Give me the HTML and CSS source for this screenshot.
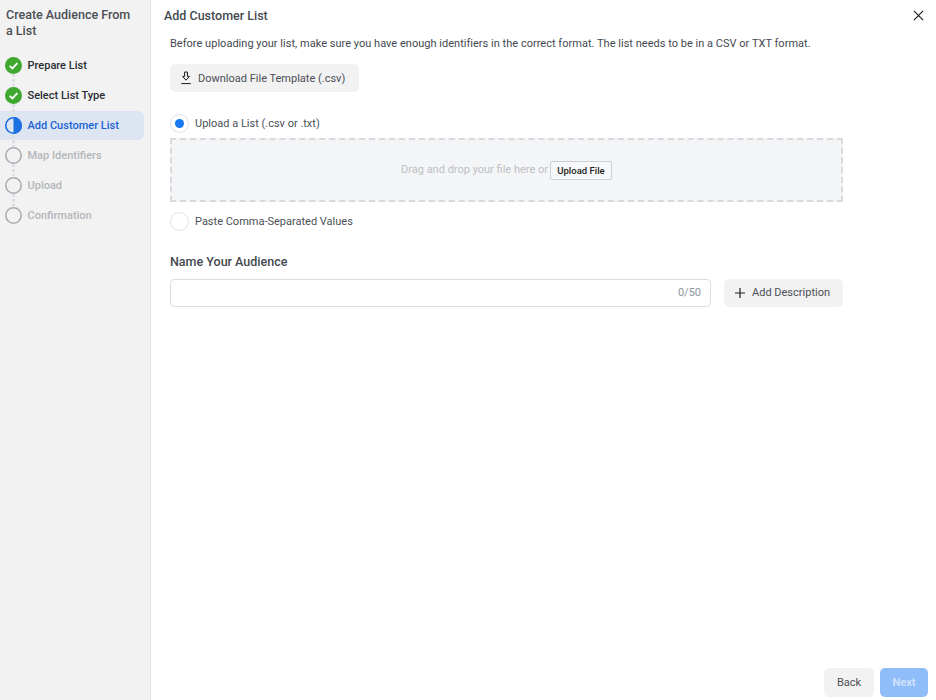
FILE: index.html
```
<!DOCTYPE html>
<html lang="en">
<head>
<meta charset="utf-8">
<title>Create Audience From a List</title>
<link rel="stylesheet" href="styles.css">
</head>
<body>
<div class="app">
  <aside class="side">
    <h1 class="side-title">Create Audience From a List</h1>
    <ol class="steps">
      <li class="step done">
        <svg class="ic" viewBox="0 0 16 16"><circle cx="8" cy="8" r="8" fill="#3fa82e"/><path d="M4.4 8.3l2.5 2.4 4.8-4.9" fill="none" stroke="#fff" stroke-width="1.7"/></svg>
        <span>Prepare List</span><i class="dots"></i>
      </li>
      <li class="step done">
        <svg class="ic" viewBox="0 0 16 16"><circle cx="8" cy="8" r="8" fill="#3fa82e"/><path d="M4.4 8.3l2.5 2.4 4.8-4.9" fill="none" stroke="#fff" stroke-width="1.7"/></svg>
        <span>Select List Type</span><i class="dots"></i>
      </li>
      <li class="step active">
        <svg class="ic" viewBox="0 0 16 16"><circle cx="8" cy="8" r="7.25" fill="none" stroke="#1b6fe0" stroke-width="1.5"/><path d="M8 0a8 8 0 0 1 0 16z" fill="#1b6fe0"/></svg>
        <span>Add Customer List</span><i class="dots"></i>
      </li>
      <li class="step todo">
        <svg class="ic" viewBox="0 0 16 16"><circle cx="8" cy="8" r="7.25" fill="none" stroke="#a9adb3" stroke-width="1.5"/></svg>
        <span>Map Identifiers</span><i class="dots"></i>
      </li>
      <li class="step todo">
        <svg class="ic" viewBox="0 0 16 16"><circle cx="8" cy="8" r="7.25" fill="none" stroke="#a9adb3" stroke-width="1.5"/></svg>
        <span>Upload</span><i class="dots"></i>
      </li>
      <li class="step todo">
        <svg class="ic" viewBox="0 0 16 16"><circle cx="8" cy="8" r="7.25" fill="none" stroke="#a9adb3" stroke-width="1.5"/></svg>
        <span>Confirmation</span>
      </li>
    </ol>
  </aside>
  <main class="main">
    <header class="head">
      <h2 class="head-title">Add Customer List</h2>
      <svg class="close" viewBox="0 0 12 12"><path d="M1 1l10 10M11 1L1 11" fill="none" stroke="#1c1e21" stroke-width="1.3"/></svg>
    </header>
    <div class="content">
      <p class="intro">Before uploading your list, make sure you have enough identifiers in the correct format. The list needs to be in a CSV or TXT format.</p>
      <button class="btn download" type="button">
        <svg class="dl" viewBox="0 0 12 14"><path d="M4.6 1h2.800v4.400h2L6 9.200 2.600 5.400h2zM1.200 12.600h9.600" fill="none" stroke="#1c1e21" stroke-width="1"/></svg>
        Download File Template (.csv)
      </button>
      <label class="radio-row first"><span class="radio on"></span>Upload a List (.csv or .txt)</label>
      <div class="drop">
        <span class="drop-text">Drag and drop your file here or</span>
        <button class="upload" type="button">Upload File</button>
      </div>
      <label class="radio-row second"><span class="radio"></span>Paste Comma-Separated Values</label>
      <h3 class="name-title">Name Your Audience</h3>
      <div class="name-row">
        <div class="field"><span>0/50</span></div>
        <button class="btn add" type="button">
          <svg class="plus" viewBox="0 0 10 10"><path d="M5 0v10M0 5h10" fill="none" stroke="#1c1e21" stroke-width="1.2"/></svg>
          Add Description
        </button>
      </div>
    </div>
    <footer class="foot">
      <button class="btn back" type="button">Back</button>
      <button class="btn next" type="button">Next</button>
    </footer>
  </main>
</div>
</body>
</html>
```
FILE: styles.css
```
* { box-sizing: border-box; }
html, body { margin: 0; height: 100%; }
body { font-family: Roboto, "Liberation Sans", sans-serif; color: #1c1e21; background: #fff; overflow: hidden; }
.app { display: flex; height: 700px; width: 936px; }
.side { width: 151px; flex: none; background: #f2f2f2; border-right: 1px solid #e4e5e7; padding: 7px 6px 0 0; }
.side-title { margin: 0 8px 11px 6px; font-size: 12.5px; line-height: 16px; font-weight: 500; color: #4b4f56; }
.steps { list-style: none; margin: 0; padding: 0; }
.step { position: relative; display: flex; align-items: center; gap: 5.5px; height: 30px; padding: 0 0 0 5px; font-size: 11px; font-weight: 500; }
.ic { width: 17px; height: 17px; flex: none; }
.step.done { color: #2b2d31; }
.step.active { color: #1b62d6; background: #dce5f1; height: 29px; margin-top: 1px; border-radius: 0 6px 6px 0; }
.step.todo { color: #b3b6ba; }
.dots { position: absolute; left: 12px; top: 24px; width: 3px; height: 12px; z-index: 1;
  background: repeating-linear-gradient(to bottom, #dcdee1 0 3px, transparent 3px 5px); }
.main { flex: 1; position: relative; min-width: 0; }
.head { display: flex; align-items: flex-start; justify-content: space-between; height: 30px; padding: 8px 12px 0 13px; }
.head-title { margin: 0; font-size: 12.5px; line-height: 15px; font-weight: 500; color: #444950; }
.close { width: 11px; height: 11px; margin-top: 2px; }
.content { padding: 0 0 0 19px; width: 692px; }
.intro { margin: 7px 0 0; font-size: 11px; line-height: 14px; letter-spacing: 0.02px; color: #444950; white-space: nowrap; }
.btn { display: inline-flex; align-items: center; border: 0; border-radius: 5px; background: #f2f2f2; font-family: inherit; font-size: 11px; color: #4b4f56; padding: 0; }
.download { margin-top: 13px; height: 28px; width: 189px; padding-left: 10px; gap: 6px; display: flex; }
.dl { width: 12px; height: 14px; }
.radio-row { display: flex; align-items: center; gap: 6px; font-size: 11px; color: #4b4f56; height: 20px; }
.radio-row.first { margin-top: 21px; }
.radio-row.second { margin-top: 9px; }
.radio { width: 19px; height: 19px; border-radius: 50%; border: 1px solid #dfe1e4; background: #fff; flex: none; position: relative; }
.radio.on::after { content: ""; position: absolute; left: 4px; top: 4px; width: 9px; height: 9px; border-radius: 50%; background: #1877f2; }
.drop { margin-top: 5px; height: 64px; display: flex; align-items: center; justify-content: center; gap: 2px; background: #f4f5f7; border: 2px dashed #d8dade; font-size: 11px; color: #bcc0c4; }
.drop-text { padding-bottom: 2px; }
.upload { height: 19px; width: 62px; padding: 0; background: #f7f8f9; border: 1px solid #ced0d4; border-radius: 2px; font-family: inherit; font-size: 9.5px; font-weight: 500; color: #1c1e21; }
.name-title { margin: 23px 0 0; font-size: 12.5px; line-height: 15px; font-weight: 500; color: #444950; }
.name-row { display: flex; gap: 13px; margin-top: 10px; }
.field { flex: 1; height: 28px; border: 1px solid #dadde1; border-radius: 4px; background: #fff; display: flex; align-items: center; justify-content: flex-end; padding: 0 9px 2px 0; font-size: 11px; color: #8d949e; }
.add { width: 119px; height: 28px; padding: 0 0 2px 11px; gap: 7px; flex: none; }
.plus { width: 10px; height: 10px; margin-top: 2px; }
.foot { position: absolute; right: 8px; bottom: 3px; display: flex; gap: 6px; }
.back, .next { height: 29px; justify-content: center; }
.back { width: 50px; }
.next { width: 48px; background: #8fbdfa; color: #cfe2fc; font-weight: 700; }
```
